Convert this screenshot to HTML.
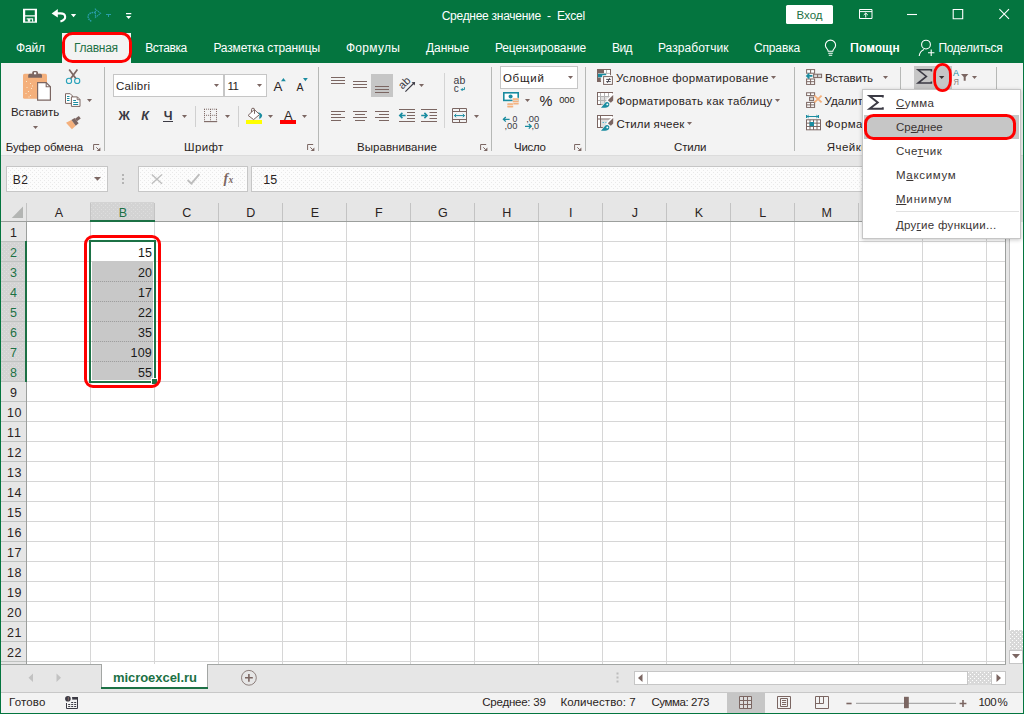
<!DOCTYPE html>
<html lang="ru"><head><meta charset="utf-8"><title>Среднее значение - Excel</title>
<style>
html,body{margin:0;padding:0}
body{width:1024px;height:714px;position:relative;overflow:hidden;background:#fff;font-family:"Liberation Sans",sans-serif;font-size:12px}
.a{position:absolute}
.t{position:absolute;white-space:pre;font-family:"Liberation Sans",sans-serif}
u{text-decoration:underline;text-underline-offset:1px}
svg{display:block;overflow:visible}
</style></head>
<body>
<div id="window">
<div class="a" style="left:0px;top:0px;width:1024px;height:63px;background:#04753f;"></div>
<div class="a" style="left:62px;top:33px;width:69px;height:30px;background:#f3f3f3;"></div>
<div class="a" style="left:1px;top:63px;width:1022px;height:92px;background:#f3f3f3;"></div>
<div class="a" style="left:1px;top:155px;width:1022px;height:47px;background:#e6e6e6;"></div>
<div class="a" style="left:1px;top:155px;width:1022px;height:1px;background:#dcdcdc;"></div>
<div class="a" style="left:6px;top:166px;width:102px;height:26px;background:#fcfcfc;border:1px solid #c6c6c6;box-sizing:border-box;"></div>
<div class="a" style="left:138px;top:166px;width:110px;height:26px;background:#fcfcfc;border:1px solid #c6c6c6;box-sizing:border-box;"></div>
<div class="a" style="left:251px;top:166px;width:769px;height:26px;background:#fcfcfc;border:1px solid #c6c6c6;box-sizing:border-box;"></div>
<svg class="a" style="left:8px;top:168px" width="98" height="22"><defs><pattern id="dp1" width="4" height="4" patternUnits="userSpaceOnUse"><rect x="0" y="0" width="1" height="1" fill="#e9e9e9"/><rect x="2" y="2" width="1" height="1" fill="#e9e9e9"/></pattern></defs><rect x="0" y="0" width="98" height="22" fill="url(#dp1)"/></svg>
<svg class="a" style="left:140px;top:168px" width="106" height="22"><defs><pattern id="dp2" width="4" height="4" patternUnits="userSpaceOnUse"><rect x="0" y="0" width="1" height="1" fill="#e9e9e9"/><rect x="2" y="2" width="1" height="1" fill="#e9e9e9"/></pattern></defs><rect x="0" y="0" width="106" height="22" fill="url(#dp2)"/></svg>
<svg class="a" style="left:253px;top:168px" width="765" height="22"><defs><pattern id="dp3" width="4" height="4" patternUnits="userSpaceOnUse"><rect x="0" y="0" width="1" height="1" fill="#e9e9e9"/><rect x="2" y="2" width="1" height="1" fill="#e9e9e9"/></pattern></defs><rect x="0" y="0" width="765" height="22" fill="url(#dp3)"/></svg>
<div class="a" style="left:1px;top:202px;width:1005px;height:20px;background:#e6e6e6;"></div>
<div class="a" style="left:90px;top:202px;width:64px;height:20px;background:#d3d3d3;"></div>
<svg class="a" style="left:91px;top:203px" width="62" height="16"><defs><pattern id="dp4" width="4" height="4" patternUnits="userSpaceOnUse"><rect x="0" y="0" width="1" height="1" fill="#dedede"/><rect x="2" y="2" width="1" height="1" fill="#dedede"/></pattern></defs><rect x="0" y="0" width="62" height="16" fill="url(#dp4)"/></svg>
<div class="a" style="left:26px;top:203px;width:1px;height:19px;background:#c3c3c3;"></div>
<div class="a" style="left:90px;top:203px;width:1px;height:19px;background:#c3c3c3;"></div>
<div class="a" style="left:154px;top:203px;width:1px;height:19px;background:#c3c3c3;"></div>
<div class="a" style="left:218px;top:203px;width:1px;height:19px;background:#c3c3c3;"></div>
<div class="a" style="left:282px;top:203px;width:1px;height:19px;background:#c3c3c3;"></div>
<div class="a" style="left:346px;top:203px;width:1px;height:19px;background:#c3c3c3;"></div>
<div class="a" style="left:410px;top:203px;width:1px;height:19px;background:#c3c3c3;"></div>
<div class="a" style="left:474px;top:203px;width:1px;height:19px;background:#c3c3c3;"></div>
<div class="a" style="left:538px;top:203px;width:1px;height:19px;background:#c3c3c3;"></div>
<div class="a" style="left:602px;top:203px;width:1px;height:19px;background:#c3c3c3;"></div>
<div class="a" style="left:666px;top:203px;width:1px;height:19px;background:#c3c3c3;"></div>
<div class="a" style="left:730px;top:203px;width:1px;height:19px;background:#c3c3c3;"></div>
<div class="a" style="left:794px;top:203px;width:1px;height:19px;background:#c3c3c3;"></div>
<div class="a" style="left:858px;top:203px;width:1px;height:19px;background:#c3c3c3;"></div>
<div class="a" style="left:922px;top:203px;width:1px;height:19px;background:#c3c3c3;"></div>
<div class="a" style="left:986px;top:203px;width:1px;height:19px;background:#c3c3c3;"></div>
<div class="a" style="left:1px;top:221px;width:1005px;height:1px;background:#9c9f9d;"></div>
<div class="a" style="left:90px;top:220px;width:65px;height:2px;background:#1c7145;"></div>
<svg class="a" style="left:11px;top:206px" width="13" height="13" viewBox="0 0 13 13"><path d="M12 0.6V12H0.8Z" fill="#b3b5b3"/></svg>
<div class="a" style="left:27px;top:222px;width:979px;height:442px;background:#fff;"></div>
<div class="a" style="left:90px;top:222px;width:1px;height:442px;background:#d6d6d6;"></div>
<div class="a" style="left:154px;top:222px;width:1px;height:442px;background:#d6d6d6;"></div>
<div class="a" style="left:218px;top:222px;width:1px;height:442px;background:#d6d6d6;"></div>
<div class="a" style="left:282px;top:222px;width:1px;height:442px;background:#d6d6d6;"></div>
<div class="a" style="left:346px;top:222px;width:1px;height:442px;background:#d6d6d6;"></div>
<div class="a" style="left:410px;top:222px;width:1px;height:442px;background:#d6d6d6;"></div>
<div class="a" style="left:474px;top:222px;width:1px;height:442px;background:#d6d6d6;"></div>
<div class="a" style="left:538px;top:222px;width:1px;height:442px;background:#d6d6d6;"></div>
<div class="a" style="left:602px;top:222px;width:1px;height:442px;background:#d6d6d6;"></div>
<div class="a" style="left:666px;top:222px;width:1px;height:442px;background:#d6d6d6;"></div>
<div class="a" style="left:730px;top:222px;width:1px;height:442px;background:#d6d6d6;"></div>
<div class="a" style="left:794px;top:222px;width:1px;height:442px;background:#d6d6d6;"></div>
<div class="a" style="left:858px;top:222px;width:1px;height:442px;background:#d6d6d6;"></div>
<div class="a" style="left:922px;top:222px;width:1px;height:442px;background:#d6d6d6;"></div>
<div class="a" style="left:986px;top:222px;width:1px;height:442px;background:#d6d6d6;"></div>
<div class="a" style="left:27px;top:241px;width:978px;height:1px;background:#d6d6d6;"></div>
<div class="a" style="left:27px;top:261px;width:978px;height:1px;background:#d6d6d6;"></div>
<div class="a" style="left:27px;top:281px;width:978px;height:1px;background:#d6d6d6;"></div>
<div class="a" style="left:27px;top:301px;width:978px;height:1px;background:#d6d6d6;"></div>
<div class="a" style="left:27px;top:321px;width:978px;height:1px;background:#d6d6d6;"></div>
<div class="a" style="left:27px;top:341px;width:978px;height:1px;background:#d6d6d6;"></div>
<div class="a" style="left:27px;top:361px;width:978px;height:1px;background:#d6d6d6;"></div>
<div class="a" style="left:27px;top:381px;width:978px;height:1px;background:#d6d6d6;"></div>
<div class="a" style="left:27px;top:401px;width:978px;height:1px;background:#d6d6d6;"></div>
<div class="a" style="left:27px;top:421px;width:978px;height:1px;background:#d6d6d6;"></div>
<div class="a" style="left:27px;top:441px;width:978px;height:1px;background:#d6d6d6;"></div>
<div class="a" style="left:27px;top:461px;width:978px;height:1px;background:#d6d6d6;"></div>
<div class="a" style="left:27px;top:481px;width:978px;height:1px;background:#d6d6d6;"></div>
<div class="a" style="left:27px;top:501px;width:978px;height:1px;background:#d6d6d6;"></div>
<div class="a" style="left:27px;top:521px;width:978px;height:1px;background:#d6d6d6;"></div>
<div class="a" style="left:27px;top:541px;width:978px;height:1px;background:#d6d6d6;"></div>
<div class="a" style="left:27px;top:561px;width:978px;height:1px;background:#d6d6d6;"></div>
<div class="a" style="left:27px;top:581px;width:978px;height:1px;background:#d6d6d6;"></div>
<div class="a" style="left:27px;top:601px;width:978px;height:1px;background:#d6d6d6;"></div>
<div class="a" style="left:27px;top:621px;width:978px;height:1px;background:#d6d6d6;"></div>
<div class="a" style="left:27px;top:641px;width:978px;height:1px;background:#d6d6d6;"></div>
<div class="a" style="left:27px;top:661px;width:978px;height:1px;background:#d6d6d6;"></div>
<div class="a" style="left:1px;top:222px;width:25px;height:442px;background:#e6e6e6;"></div>
<div class="a" style="left:1px;top:242px;width:25px;height:140px;background:#d3d3d3;"></div>
<svg class="a" style="left:2px;top:243px" width="22" height="138"><defs><pattern id="dp5" width="4" height="4" patternUnits="userSpaceOnUse"><rect x="0" y="0" width="1" height="1" fill="#dedede"/><rect x="2" y="2" width="1" height="1" fill="#dedede"/></pattern></defs><rect x="0" y="0" width="22" height="138" fill="url(#dp5)"/></svg>
<div class="a" style="left:1px;top:241px;width:25px;height:1px;background:#bfc2c0;"></div>
<div class="a" style="left:1px;top:261px;width:25px;height:1px;background:#bfc2c0;"></div>
<div class="a" style="left:1px;top:281px;width:25px;height:1px;background:#bfc2c0;"></div>
<div class="a" style="left:1px;top:301px;width:25px;height:1px;background:#bfc2c0;"></div>
<div class="a" style="left:1px;top:321px;width:25px;height:1px;background:#bfc2c0;"></div>
<div class="a" style="left:1px;top:341px;width:25px;height:1px;background:#bfc2c0;"></div>
<div class="a" style="left:1px;top:361px;width:25px;height:1px;background:#bfc2c0;"></div>
<div class="a" style="left:1px;top:381px;width:25px;height:1px;background:#bfc2c0;"></div>
<div class="a" style="left:1px;top:401px;width:25px;height:1px;background:#bfc2c0;"></div>
<div class="a" style="left:1px;top:421px;width:25px;height:1px;background:#bfc2c0;"></div>
<div class="a" style="left:1px;top:441px;width:25px;height:1px;background:#bfc2c0;"></div>
<div class="a" style="left:1px;top:461px;width:25px;height:1px;background:#bfc2c0;"></div>
<div class="a" style="left:1px;top:481px;width:25px;height:1px;background:#bfc2c0;"></div>
<div class="a" style="left:1px;top:501px;width:25px;height:1px;background:#bfc2c0;"></div>
<div class="a" style="left:1px;top:521px;width:25px;height:1px;background:#bfc2c0;"></div>
<div class="a" style="left:1px;top:541px;width:25px;height:1px;background:#bfc2c0;"></div>
<div class="a" style="left:1px;top:561px;width:25px;height:1px;background:#bfc2c0;"></div>
<div class="a" style="left:1px;top:581px;width:25px;height:1px;background:#bfc2c0;"></div>
<div class="a" style="left:1px;top:601px;width:25px;height:1px;background:#bfc2c0;"></div>
<div class="a" style="left:1px;top:621px;width:25px;height:1px;background:#bfc2c0;"></div>
<div class="a" style="left:1px;top:641px;width:25px;height:1px;background:#bfc2c0;"></div>
<div class="a" style="left:1px;top:661px;width:25px;height:1px;background:#bfc2c0;"></div>
<div class="a" style="left:26px;top:222px;width:1px;height:442px;background:#9c9f9d;"></div>
<div class="a" style="left:25px;top:241px;width:2px;height:141px;background:#1c7145;"></div>
<div class="a" style="left:92px;top:261px;width:61px;height:119px;background:#c8c8c8;"></div>
<div class="a" style="left:92px;top:281px;width:61px;height:1px;background:repeating-linear-gradient(90deg,#9f9f9f 0 1px,#c2c2c2 1px 2px);"></div>
<div class="a" style="left:92px;top:301px;width:61px;height:1px;background:repeating-linear-gradient(90deg,#9f9f9f 0 1px,#c2c2c2 1px 2px);"></div>
<div class="a" style="left:92px;top:321px;width:61px;height:1px;background:repeating-linear-gradient(90deg,#9f9f9f 0 1px,#c2c2c2 1px 2px);"></div>
<div class="a" style="left:92px;top:341px;width:61px;height:1px;background:repeating-linear-gradient(90deg,#9f9f9f 0 1px,#c2c2c2 1px 2px);"></div>
<div class="a" style="left:92px;top:361px;width:61px;height:1px;background:repeating-linear-gradient(90deg,#9f9f9f 0 1px,#c2c2c2 1px 2px);"></div>
<div class="a" style="left:89px;top:240px;width:67px;height:143px;border:2px solid #1c7145;box-sizing:border-box;"></div>
<div class="a" style="left:151px;top:378px;width:6px;height:6px;background:#fff;"></div>
<div class="a" style="left:152px;top:379px;width:5px;height:5px;background:#1c7145;"></div>
<div class="a" style="left:84.2px;top:234.9px;width:76.9px;height:152.9px;border:3px solid #ff0000;border-radius:9px;box-sizing:border-box;"></div>
<div class="a" style="left:1005px;top:202px;width:18px;height:462px;background:#e6e6e6;"></div>
<div class="a" style="left:1005px;top:222px;width:1px;height:442px;background:#9c9f9d;"></div>
<div class="a" style="left:1009px;top:222px;width:1px;height:408px;background:#c0c0c0;"></div>
<div class="a" style="left:1009px;top:629px;width:14px;height:1px;background:#c0c0c0;"></div>
<div class="a" style="left:1010px;top:222px;width:13px;height:408px;background:#fff;"></div>
<div class="a" style="left:1010px;top:630px;width:13px;height:20px;background:#d9d9d9;"></div>
<svg class="a" style="left:1010px;top:630px" width="13" height="20"><defs><pattern id="dp6" width="4" height="4" patternUnits="userSpaceOnUse"><rect x="0" y="0" width="1" height="1" fill="#ffffff"/><rect x="2" y="2" width="1" height="1" fill="#ffffff"/></pattern></defs><rect x="0" y="0" width="13" height="20" fill="url(#dp6)"/></svg>
<div class="a" style="left:1009px;top:650px;width:14px;height:14px;background:#fff;border:1px solid #c6c6c6;box-sizing:border-box;"></div>
<svg class="a" style="left:1012px;top:654px" width="8" height="5" viewBox="0 0 8 5"><path d="M0 0H8L4 4.5Z" fill="#7b6662"/></svg>
<div class="a" style="left:1px;top:664px;width:1022px;height:28px;background:#e6e6e6;"></div>
<div class="a" style="left:1px;top:692px;width:1022px;height:1px;background:#c8c8c8;"></div>
<div class="a" style="left:1px;top:664px;width:1005px;height:1px;background:#a3a6a4;"></div>
<div class="a" style="left:101px;top:664px;width:107px;height:24px;background:#fff;"></div>
<div class="a" style="left:101px;top:664px;width:1px;height:23px;background:#a3a6a4;"></div>
<div class="a" style="left:207px;top:664px;width:1px;height:23px;background:#a3a6a4;"></div>
<div class="a" style="left:101px;top:687px;width:107px;height:2px;background:#1c7145;"></div>
<svg class="a" style="left:28px;top:673px" width="34" height="10" viewBox="0 0 34 10"><path d="M5 0.5V9L0.5 4.75Z M28.5 0.5V9L33 4.75Z" fill="#c2c2c2"/></svg>
<svg class="a" style="left:240px;top:669px" width="18" height="18" viewBox="0 0 18 18"><circle cx="8.9" cy="8.8" r="7.4" fill="none" stroke="#8d7f7c" stroke-width="1"/><path d="M5 8.8H12.8M8.9 4.9V12.7" stroke="#7b6662" stroke-width="1.6"/></svg>
<svg class="a" style="left:616px;top:672px" width="3" height="11" viewBox="0 0 3 11"><path d="M0.5 0.5h2v2h-2zM0.5 4.5h2v2h-2zM0.5 8.5h2v2h-2z" fill="#bcbcbc"/></svg>
<div class="a" style="left:633.5px;top:671px;width:14px;height:14px;background:#fff;border:1px solid #c6c6c6;box-sizing:border-box;"></div>
<div class="a" style="left:647.5px;top:671px;width:320px;height:14px;background:#fff;border:1px solid #c6c6c6;border-left:none;box-sizing:border-box;"></div>
<div class="a" style="left:967.5px;top:671px;width:24px;height:14px;background:#d9d9d9;"></div>
<svg class="a" style="left:968px;top:672px" width="23" height="12"><defs><pattern id="dp7" width="4" height="4" patternUnits="userSpaceOnUse"><rect x="0" y="0" width="1" height="1" fill="#ffffff"/><rect x="2" y="2" width="1" height="1" fill="#ffffff"/></pattern></defs><rect x="0" y="0" width="23" height="12" fill="url(#dp7)"/></svg>
<div class="a" style="left:991px;top:671px;width:14.5px;height:14px;background:#fff;border:1px solid #c6c6c6;box-sizing:border-box;"></div>
<svg class="a" style="left:638px;top:674px" width="5" height="8" viewBox="0 0 5 8"><path d="M4.5 0V8L0 4Z" fill="#7b6662"/></svg>
<svg class="a" style="left:996px;top:674px" width="5" height="8" viewBox="0 0 5 8"><path d="M0.5 0V8L5 4Z" fill="#7b6662"/></svg>
<div class="a" style="left:1px;top:693px;width:1022px;height:20px;background:#f3f3f3;"></div>
<div class="a" style="left:727px;top:693px;width:38px;height:20px;background:#c6c6c6;"></div>
<div class="a" style="left:0px;top:63px;width:1px;height:651px;background:#04753f;"></div>
<div class="a" style="left:1023px;top:63px;width:1px;height:651px;background:#04753f;"></div>
<div class="a" style="left:0px;top:713px;width:1024px;height:1px;background:#04753f;"></div>
<div class="a" style="left:104px;top:67px;width:1px;height:84px;background:#b6b8b6;"></div>
<div class="a" style="left:318px;top:67px;width:1px;height:84px;background:#b6b8b6;"></div>
<div class="a" style="left:491px;top:67px;width:1px;height:84px;background:#b6b8b6;"></div>
<div class="a" style="left:585px;top:67px;width:1px;height:84px;background:#b6b8b6;"></div>
<div class="a" style="left:794px;top:67px;width:1px;height:84px;background:#b6b8b6;"></div>
<div class="a" style="left:900px;top:67px;width:1px;height:23px;background:#b6b8b6;"></div>
<div class="a" style="left:995.5px;top:67px;width:1px;height:23px;background:#b6b8b6;"></div>
<div class="a" style="left:195px;top:106px;width:1px;height:21px;background:#d0d0d0;"></div>
<div class="a" style="left:238px;top:106px;width:1px;height:21px;background:#d0d0d0;"></div>
<div class="a" style="left:444px;top:73px;width:1px;height:55px;background:#d4d4d4;"></div>
<div class="a" style="left:113px;top:74px;width:111px;height:23px;background:#fff;border:1px solid #c6c6c6;box-sizing:border-box;"></div>
<div class="a" style="left:224px;top:74px;width:43px;height:23px;background:#fff;border:1px solid #c6c6c6;box-sizing:border-box;"></div>
<div class="a" style="left:500px;top:66px;width:78px;height:23px;background:#fff;border:1px solid #c6c6c6;box-sizing:border-box;"></div>
<div class="a" style="left:371px;top:74px;width:22px;height:23px;background:#c6c6c6;"></div>
<div class="a" style="left:914px;top:66px;width:37.5px;height:23.5px;background:#c6c6c6;"></div>
<svg class="a" style="left:33.3px;top:126px" width="5" height="3" viewBox="0 0 5 3"><path d="M0 0H5L2.5 3Z" fill="#7b6662"/></svg>
<svg class="a" style="left:87px;top:99px" width="5" height="3" viewBox="0 0 5 3"><path d="M0 0H5L2.5 3Z" fill="#7b6662"/></svg>
<svg class="a" style="left:213.8px;top:84px" width="5" height="3" viewBox="0 0 5 3"><path d="M0 0H5L2.5 3Z" fill="#7b6662"/></svg>
<svg class="a" style="left:256.8px;top:84px" width="5" height="3" viewBox="0 0 5 3"><path d="M0 0H5L2.5 3Z" fill="#7b6662"/></svg>
<svg class="a" style="left:182px;top:115px" width="5" height="3" viewBox="0 0 5 3"><path d="M0 0H5L2.5 3Z" fill="#7b6662"/></svg>
<svg class="a" style="left:225px;top:115px" width="5" height="3" viewBox="0 0 5 3"><path d="M0 0H5L2.5 3Z" fill="#7b6662"/></svg>
<svg class="a" style="left:268px;top:115px" width="5" height="3" viewBox="0 0 5 3"><path d="M0 0H5L2.5 3Z" fill="#7b6662"/></svg>
<svg class="a" style="left:302px;top:115px" width="5" height="3" viewBox="0 0 5 3"><path d="M0 0H5L2.5 3Z" fill="#7b6662"/></svg>
<svg class="a" style="left:418.8px;top:84px" width="5" height="3" viewBox="0 0 5 3"><path d="M0 0H5L2.5 3Z" fill="#7b6662"/></svg>
<svg class="a" style="left:474px;top:115px" width="5" height="3" viewBox="0 0 5 3"><path d="M0 0H5L2.5 3Z" fill="#7b6662"/></svg>
<svg class="a" style="left:524.8px;top:99px" width="5" height="3" viewBox="0 0 5 3"><path d="M0 0H5L2.5 3Z" fill="#7b6662"/></svg>
<svg class="a" style="left:568px;top:76px" width="5" height="3" viewBox="0 0 5 3"><path d="M0 0H5L2.5 3Z" fill="#7b6662"/></svg>
<svg class="a" style="left:770.8px;top:76px" width="5" height="3" viewBox="0 0 5 3"><path d="M0 0H5L2.5 3Z" fill="#7b6662"/></svg>
<svg class="a" style="left:774.8px;top:99px" width="5" height="3" viewBox="0 0 5 3"><path d="M0 0H5L2.5 3Z" fill="#7b6662"/></svg>
<svg class="a" style="left:687px;top:122.3px" width="5" height="3" viewBox="0 0 5 3"><path d="M0 0H5L2.5 3Z" fill="#7b6662"/></svg>
<svg class="a" style="left:883px;top:76px" width="5" height="3" viewBox="0 0 5 3"><path d="M0 0H5L2.5 3Z" fill="#7b6662"/></svg>
<svg class="a" style="left:972.3px;top:76px" width="5" height="3" viewBox="0 0 5 3"><path d="M0 0H5L2.5 3Z" fill="#7b6662"/></svg>
<svg class="a" style="left:939px;top:76px" width="5.4" height="3" viewBox="0 0 5.4 3"><path d="M0 0H5.4L2.7 3Z" fill="#3b3332"/></svg>
<svg class="a" style="left:93.8px;top:176.5px" width="7" height="3.8" viewBox="0 0 7 3.8"><path d="M0 0H7L3.5 3.8Z" fill="#7b6662"/></svg>
<svg class="a" style="left:92.8px;top:144px" width="9" height="8" viewBox="0 0 9 8"><path d="M0.6 6V0.5H6.2" fill="none" stroke="#7b6662" stroke-width="1"/><path d="M7.4 3.4V7H3.6Z" fill="#7b6662"/><path d="M3.3 3.3L5.5 5.5" stroke="#7b6662" stroke-width="1"/></svg>
<svg class="a" style="left:306.8px;top:144px" width="9" height="8" viewBox="0 0 9 8"><path d="M0.6 6V0.5H6.2" fill="none" stroke="#7b6662" stroke-width="1"/><path d="M7.4 3.4V7H3.6Z" fill="#7b6662"/><path d="M3.3 3.3L5.5 5.5" stroke="#7b6662" stroke-width="1"/></svg>
<svg class="a" style="left:479.8px;top:144px" width="9" height="8" viewBox="0 0 9 8"><path d="M0.6 6V0.5H6.2" fill="none" stroke="#7b6662" stroke-width="1"/><path d="M7.4 3.4V7H3.6Z" fill="#7b6662"/><path d="M3.3 3.3L5.5 5.5" stroke="#7b6662" stroke-width="1"/></svg>
<svg class="a" style="left:573.8px;top:144px" width="9" height="8" viewBox="0 0 9 8"><path d="M0.6 6V0.5H6.2" fill="none" stroke="#7b6662" stroke-width="1"/><path d="M7.4 3.4V7H3.6Z" fill="#7b6662"/><path d="M3.3 3.3L5.5 5.5" stroke="#7b6662" stroke-width="1"/></svg>
<div class="a" style="left:163px;top:121px;width:10px;height:1px;background:#3b3a44;"></div>
<div class="a" style="left:246px;top:120px;width:16px;height:4px;background:#ffff00;"></div>
<div class="a" style="left:280px;top:120px;width:16px;height:4px;background:#ff0000;"></div>
<svg class="a" style="left:22px;top:8px" width="16" height="16" viewBox="22 8 16 16"><path fill-rule="evenodd" fill="#fff" d="M23 8.8h14v14h-14z M25.2 10.2h9.6v5h-9.6z M25.2 16.6h9.6v5h-9.6z"/><path d="M26.6 18.2h6.6v3.6h-1.2v-2.4h-1.8v2.4h-2.4v-2.4h-1.2z" fill="#fff" opacity="0.95"/></svg>
<svg class="a" style="left:50px;top:8px" width="28" height="16" viewBox="50 8 28 16"><path d="M51.6 13.4L57.8 9V17.6Z" fill="#fff"/><path d="M57 13.4H60.6C65.8 13.4 67.6 19.2 60.4 21.4" fill="none" stroke="#fff" stroke-width="2.1"/><path d="M70.9 14H76.2L73.55 17.2Z" fill="#fff"/></svg>
<svg class="a" style="left:86px;top:8px" width="28" height="16" viewBox="86 8 28 16"><g opacity="0.9"><path d="M100.6 13.4L95.4 9.2V17.4Z" fill="none" stroke="#2fa3b4" stroke-width="1.1" stroke-dasharray="1.4 0.7"/><path d="M95.6 12.6H93C87.2 13 86.4 18.4 91.6 21.6" fill="none" stroke="#2fa3b4" stroke-width="1.5" stroke-dasharray="1.6 0.7"/><path d="M106 14.5H111M108.5 14.5V17" stroke="#2fa3b4" stroke-width="1" fill="none"/></g></svg>
<svg class="a" style="left:125px;top:12px" width="8" height="8" viewBox="125 12 8 8"><path d="M126 13h5.3v1.2h-5.3z M126 15.9h5.3L128.65 19Z" fill="#fff"/></svg>
<svg class="a" style="left:858px;top:8px" width="16" height="12" viewBox="858 8 16 12"><path d="M859.5 9.5h12.5v9h-12.5z M859.5 11.6h12.5" fill="none" stroke="#fff" stroke-width="1"/><path d="M865.75 17.5V13.2M863.7 15L865.75 13L867.8 15" fill="none" stroke="#fff" stroke-width="1"/></svg>
<svg class="a" style="left:906px;top:13px" width="12" height="3" viewBox="906 13 12 3"><path d="M907 14.5H917" stroke="#fff" stroke-width="1.1"/></svg>
<svg class="a" style="left:952px;top:8px" width="12" height="12" viewBox="952 8 12 12"><path d="M953.2 9.5h9.5v9.2h-9.5z" fill="none" stroke="#fff" stroke-width="1.1"/></svg>
<svg class="a" style="left:998px;top:8px" width="12" height="12" viewBox="998 8 12 12"><path d="M999.4 9.2L1009 18.8M1009 9.2L999.4 18.8" fill="none" stroke="#fff" stroke-width="1.1"/></svg>
<div class="a" style="left:786px;top:5px;width:47px;height:19px;background:#fff;border-radius:1.5px"></div>
<svg class="a" style="left:823px;top:38px" width="15" height="19" viewBox="823 38 15 19"><path d="M828.2 51.3C828.2 49 825.4 48.3 825.4 45.2A5.1 5.1 0 0 1 835.6 45.2C835.6 48.3 832.8 49 832.8 51.3Z" fill="none" stroke="#fff" stroke-width="1.1"/><path d="M828.2 53.2H832.8M828.8 55.2H832.2" stroke="#fff" stroke-width="1.1"/></svg>
<svg class="a" style="left:918px;top:38px" width="18" height="19" viewBox="918 38 18 19"><circle cx="926" cy="44.6" r="4.4" fill="none" stroke="#fff" stroke-width="1.1"/><path d="M919.2 56C919.6 52.6 921.6 50.4 924 49.4" fill="none" stroke="#fff" stroke-width="1.1"/><path d="M928 52.8H934.4M931.2 49.6V56" stroke="#fff" stroke-width="1.1"/></svg>
<svg class="a" style="left:22px;top:70px" width="30" height="32" viewBox="22 70 30 32"><rect x="23" y="73.8" width="24" height="25" rx="1.6" fill="#f4b07c"/><g fill="#fde9c9"><rect x="26" y="81" width="1" height="1"/><rect x="30" y="83" width="1" height="1"/><rect x="26.5" y="87" width="1" height="1"/><rect x="31" y="88" width="1" height="1"/><rect x="28" y="91" width="1" height="1"/><rect x="25.5" y="93" width="1" height="1"/><rect x="30" y="95" width="1" height="1"/><rect x="32" y="85.5" width="1" height="1"/><rect x="28.5" y="96.5" width="1" height="1"/></g><path d="M28.2 77.8V75.3Q28.2 73.8 29.8 73.8H32.2V72.4Q32.2 70.9 33.8 70.9H36.4Q38 70.9 38 72.4V73.8H40.4Q42 73.8 42 75.3V77.8Z" fill="#7b6662"/><rect x="34" y="72.3" width="2.2" height="2" fill="#fff"/><path d="M37.6 82.6H46.2L50.4 86.8V100.2H37.6Z" fill="#fff" stroke="#7b6662" stroke-width="1.2"/><path d="M46.2 82.6V86.8H50.4" fill="none" stroke="#7b6662" stroke-width="1.1"/></svg>
<svg class="a" style="left:65px;top:68px" width="17" height="17" viewBox="65 68 17 17"><path d="M69.2 69.4L76.2 79M77.4 69.4L70.4 79" stroke="#7b6662" stroke-width="1.7" fill="none"/><circle cx="69" cy="80.9" r="2.6" fill="none" stroke="#2aa3bb" stroke-width="1.1"/><circle cx="77.2" cy="80.9" r="2.6" fill="none" stroke="#2aa3bb" stroke-width="1.1"/></svg>
<svg class="a" style="left:64px;top:92px" width="18" height="16" viewBox="64 92 18 16"><path d="M65.5 93.7H70.2L72.4 95.9V103.4H65.5Z" fill="#fff" stroke="#7b6662" stroke-width="1"/><path d="M67 96.5H69.5M67 98.5H69.5M67 100.5H69.5" stroke="#1a8ca0" stroke-width="1"/><path d="M71.4 96.9H77.4L80 99.5V106.4H71.4Z" fill="#fff" stroke="#7b6662" stroke-width="1"/><path d="M77.2 97V99.7H80" fill="none" stroke="#7b6662" stroke-width="0.9"/><path d="M73.2 100.5H76M73.2 102.5H78.2M73.2 104.5H78.2" stroke="#1a8ca0" stroke-width="1"/></svg>
<svg class="a" style="left:65px;top:115px" width="17" height="15" viewBox="65 115 17 15"><path d="M66 122.8L71.4 120L75.8 125.8L71.9 129.2Z" fill="#f4b07c"/><path d="M71.4 120L74.6 118L78.6 123.2L75.8 125.8Z" fill="#7b6662"/><path d="M76 120L79.8 117.2" stroke="#7b6662" stroke-width="3.2" fill="none"/></svg>
<svg class="a" style="left:203px;top:108px" width="15" height="15" viewBox="203 108 15 15"><path d="M204 109.2H217M204 115.3H217M204.5 109V121M210.5 109V121M216.5 109V121" stroke="#7b6662" stroke-width="1" stroke-dasharray="1 1.05" fill="none"/><path d="M204 121.6H217.2" stroke="#7b6662" stroke-width="1.1"/></svg>
<svg class="a" style="left:280px;top:77px" width="8" height="5" viewBox="280 77 8 5"><path d="M281 81.2H285.8L283.4 78Z" fill="#1a8ca0"/></svg>
<svg class="a" style="left:302px;top:77px" width="8" height="5" viewBox="302 77 8 5"><path d="M303 78H307.8L305.4 81.2Z" fill="#1a8ca0"/></svg>
<svg class="a" style="left:246px;top:107px" width="18" height="14" viewBox="246 107 18 14"><path d="M254.3 109.5L259.6 114.5L253.6 119.6L248.1 115.4Z" fill="#fff" stroke="#7b6662" stroke-width="1"/><path d="M251.5 112V109.6Q251.5 108.2 253 108.2Q254.5 108.2 254.5 109.6V113.8" fill="none" stroke="#7b6662" stroke-width="1"/><path d="M258 111.9Q261.4 112.6 262.2 115Q262.4 117.6 259.6 119.3Q259 117.4 259.4 116Q260.4 114.6 258 111.9Z" fill="#1a8ca0"/></svg>
<svg class="a" style="left:330px;top:76px" width="16" height="9" viewBox="330 76 16 9"><path d="M331 77.5H345M331 80.5H345M331 83.5H345" stroke="#7b6662" stroke-width="1" fill="none"/></svg>
<svg class="a" style="left:352px;top:80px" width="16" height="9" viewBox="352 80 16 9"><path d="M353 81.5H367M353 84.5H367M353 87.5H367" stroke="#7b6662" stroke-width="1" fill="none"/></svg>
<svg class="a" style="left:374px;top:85px" width="16" height="9" viewBox="374 85 16 9"><path d="M375 86.5H389M375 89.5H389M375 92.5H389" stroke="#7b6662" stroke-width="1" fill="none"/></svg>
<svg class="a" style="left:330px;top:110px" width="16" height="12" viewBox="330 110 16 12"><path d="M331 111.5H345M331 114.5H341M331 117.5H345M331 120.5H341" stroke="#7b6662" stroke-width="1" fill="none"/></svg>
<svg class="a" style="left:352px;top:110px" width="16" height="12" viewBox="352 110 16 12"><path d="M353 111.5H367M355 114.5H365M353 117.5H367M355 120.5H365" stroke="#7b6662" stroke-width="1" fill="none"/></svg>
<svg class="a" style="left:374px;top:110px" width="16" height="12" viewBox="374 110 16 12"><path d="M375 111.5H389M379 114.5H389M375 117.5H389M379 120.5H389" stroke="#7b6662" stroke-width="1" fill="none"/></svg>
<svg class="a" style="left:398px;top:108px" width="18" height="15" viewBox="398 108 18 15"><path d="M399 109.5H415M407 112.5H415M407 115.5H415M407 118.5H415M399 121.5H415" stroke="#7b6662" stroke-width="1" fill="none"/><path d="M399.8 115.5H405.6M402.4 112.9L399.8 115.5L402.4 118.1" stroke="#1a8ca0" stroke-width="1.6" fill="none"/></svg>
<svg class="a" style="left:420px;top:108px" width="18" height="15" viewBox="420 108 18 15"><path d="M421 109.5H437M429.5 112.5H437M429.5 115.5H437M429.5 118.5H437M421 121.5H437" stroke="#7b6662" stroke-width="1" fill="none"/><path d="M421.2 115.5H427M424.4 112.9L427 115.5L424.4 118.1" stroke="#1a8ca0" stroke-width="1.6" fill="none"/></svg>
<svg class="a" style="left:398px;top:76px" width="20" height="17" viewBox="398 76 20 17"><text x="0" y="0" transform="translate(402.6,89.8) rotate(-45)" font-family="Liberation Sans, sans-serif" font-size="11" fill="#3b3a44">ab</text><path d="M405.4 91.6L414 83" stroke="#3b3a44" stroke-width="1.1" fill="none"/><path d="M415.1 81.9L411.6 82.3L414.7 85.4Z" fill="#3b3a44"/></svg>
<svg class="a" style="left:453px;top:76px" width="14" height="17" viewBox="453 76 14 17"><text x="453.6" y="84.1" font-family="Liberation Sans, sans-serif" font-size="10" fill="#3b3a44" textLength="11.6" lengthAdjust="spacingAndGlyphs">ab</text><text x="453.8" y="91.7" font-family="Liberation Sans, sans-serif" font-size="10" fill="#3b3a44">c</text><path d="M464.4 87.2V89.6H461.2M462.6 88.2L461.2 89.6L462.6 91" stroke="#1a8ca0" stroke-width="1" fill="none"/></svg>
<svg class="a" style="left:451px;top:107px" width="17" height="17" viewBox="451 107 17 17"><path d="M452.5 108.5H466.5V122.5H452.5Z M452.5 111.5H466.5M452.5 119.5H466.5M459.5 108.5V111.5M459.5 119.5V122.5" fill="none" stroke="#7b6662" stroke-width="1"/><path d="M454.6 115.6H464.4M456.2 114L454.4 115.6L456.2 117.2M462.8 114L464.6 115.6L462.8 117.2" stroke="#1a8ca0" stroke-width="1" fill="none"/></svg>
<svg class="a" style="left:502px;top:91px" width="18" height="18" viewBox="502 91 18 18"><rect x="503.8" y="92.8" width="14.4" height="7.6" fill="#fff" stroke="#1a8ca0" stroke-width="1.6"/><circle cx="510.6" cy="96.4" r="2" fill="#1a8ca0"/><g fill="#f4b07c" stroke="#f3f3f3" stroke-width="0.5"><rect x="512.4" y="98" width="6.6" height="2.4" rx="1"/><rect x="512.4" y="100.4" width="6.6" height="2.2" rx="1"/><rect x="512.4" y="102.6" width="6.6" height="2.2" rx="1"/><rect x="507" y="103" width="6.4" height="2.4" rx="1"/><rect x="507" y="105.4" width="6.4" height="2.4" rx="1"/></g></svg>
<svg class="a" style="left:502px;top:115px" width="17" height="16" viewBox="502 115 17 16"><path d="M503.4 119.3H509.6M505.8 117L503.4 119.3L505.8 121.6" stroke="#1a8ca0" stroke-width="1.3" fill="none"/><text x="512.6" y="122" font-family="Liberation Sans, sans-serif" font-size="9" fill="#3b3a44" textLength="4.8" lengthAdjust="spacingAndGlyphs">0</text><text x="504.4" y="129.2" font-family="Liberation Sans, sans-serif" font-size="9" fill="#3b3a44" textLength="13" lengthAdjust="spacingAndGlyphs">,00</text></svg>
<svg class="a" style="left:524px;top:115px" width="17" height="16" viewBox="524 115 17 16"><path d="M525 126.3H531.2M528.8 124L531.2 126.3L528.8 128.6" stroke="#1a8ca0" stroke-width="1.3" fill="none"/><text x="526.2" y="122" font-family="Liberation Sans, sans-serif" font-size="9" fill="#3b3a44" textLength="13" lengthAdjust="spacingAndGlyphs">,00</text><text x="531.6" y="129.2" font-family="Liberation Sans, sans-serif" font-size="9" fill="#3b3a44" textLength="7.6" lengthAdjust="spacingAndGlyphs">,0</text></svg>
<svg class="a" style="left:596px;top:68px" width="18" height="18" viewBox="596 68 18 18"><rect x="597.5" y="69.5" width="13" height="12" fill="#fff" stroke="#7b6662" stroke-width="1"/><rect x="597" y="69" width="7" height="4.4" fill="#7b6662"/><path d="M606.5 70V73.4M604 73.4H610" stroke="#b8b8b8" stroke-width="1" fill="none"/><rect x="598" y="73.8" width="8.2" height="3.5" fill="#1a8ca0"/><rect x="597" y="77.6" width="3.8" height="4.4" fill="#7b6662"/><rect x="601" y="77.6" width="3" height="5" fill="#f3f3f3"/><rect x="602.2" y="75.2" width="11.6" height="10.6" fill="#f9f9f9"/><rect x="603.6" y="76.6" width="8.8" height="7.8" fill="#fff" stroke="#7b6662" stroke-width="1"/><path d="M606.2 79.4H610.8M606.2 81.6H610.8M609.6 78.2L607.4 82.8" stroke="#3b3a44" stroke-width="0.9"/></svg>
<svg class="a" style="left:596px;top:91px" width="19" height="18" viewBox="596 91 19 18"><rect x="597.5" y="92.5" width="15" height="12" fill="#fff" stroke="#7b6662" stroke-width="1"/><rect x="601" y="97" width="11" height="7.5" fill="#dedede"/><path d="M600.5 93V104M604.5 93V104M608.5 93V104M598 96.5H612M598 100.5H612" stroke="#b2b2b2" stroke-width="1" fill="none"/><path d="M614 93.6V106H601.6L606.6 100.4Z" fill="#f3f3f3"/><path d="M606.6 100.6L613.4 93.4" stroke="#fff" stroke-width="1.4"/><path d="M613.2 94.9V100.4L610.8 102.8L607.8 100.2Z" fill="#7b6662"/><path d="M601 107.8L604.6 103.4Q606 101.7 608 102.2Q609.7 103 609.3 105Q608.6 107.6 605 107.8Z" fill="#1a8ca0"/><circle cx="607.3" cy="104.4" r="0.95" fill="#fff"/></svg>
<svg class="a" style="left:596px;top:114px" width="19" height="18" viewBox="596 114 19 18"><rect x="597.5" y="115.5" width="15" height="12" fill="#fff" stroke="#7b6662" stroke-width="1"/><rect x="601" y="119.5" width="11" height="7.5" fill="#dedede"/><path d="M598 119H612M600.5 116V127" stroke="#7b6662" stroke-width="1" fill="none"/><path d="M602.6 122.5h1.4M605.4 122.5h1.4" stroke="#4ab6d0" stroke-width="1.1"/><path d="M614 116.6V129H601.6L606.6 123.4Z" fill="#f3f3f3"/><path d="M606.6 123.6L613.4 116.4" stroke="#fff" stroke-width="1.4"/><path d="M613.2 117.9V123.4L610.8 125.8L607.8 123.2Z" fill="#7b6662"/><path d="M601 130.8L604.6 126.4Q606 124.7 608 125.2Q609.7 126 609.3 128Q608.6 130.6 605 130.8Z" fill="#1a8ca0"/><circle cx="607.3" cy="127.4" r="0.95" fill="#fff"/></svg>
<svg class="a" style="left:805px;top:68px" width="18" height="18" viewBox="805 68 18 18"><rect x="806.6" y="69.6" width="8" height="3.6" fill="#fff" stroke="#7b6662" stroke-width="1"/><path d="M810.6 69.6V73.2" stroke="#7b6662" stroke-width="1" fill="none"/><rect x="813.6" y="74.2" width="8" height="3.4" fill="#d6d6d6" stroke="#7b6662" stroke-width="1"/><path d="M817.6 74.2V77.6" stroke="#7b6662" stroke-width="1" fill="none"/><rect x="806.6" y="79" width="8" height="5.4" fill="#fff" stroke="#7b6662" stroke-width="1"/><path d="M810.6 79V84.4M806.6 81.7H814.6" stroke="#7b6662" stroke-width="1" fill="none"/><path d="M807 75.9H812.4M809.4 73.5L806.9 75.9L809.4 78.3" stroke="#1a8ca0" stroke-width="1.6" fill="none"/></svg>
<svg class="a" style="left:805px;top:91px" width="18" height="18" viewBox="805 91 18 18"><rect x="806.6" y="92.8" width="8" height="2.8" fill="#fff" stroke="#7b6662" stroke-width="1"/><path d="M810.6 92.8V95.6" stroke="#7b6662" stroke-width="1" fill="none"/><rect x="809.6" y="97.2" width="4" height="3.4" fill="#d6d6d6" stroke="#7b6662" stroke-width="1"/><rect x="806.6" y="102.4" width="8" height="5" fill="#fff" stroke="#7b6662" stroke-width="1"/><path d="M810.6 102.4V107.4M806.6 104.9H814.6" stroke="#7b6662" stroke-width="1" fill="none"/><path d="M814.4 95.6L821.6 102.4M821.6 95.6L814.4 102.4" stroke="#f4b07c" stroke-width="1.9" fill="none"/></svg>
<svg class="a" style="left:805px;top:114px" width="18" height="18" viewBox="805 114 18 18"><path d="M806.5 115V118M818.5 115V118M807 116.5H818M808.6 115.2L807 116.5L808.6 117.8M816.4 115.2L818 116.5L816.4 117.8" stroke="#1a8ca0" stroke-width="1" fill="none"/><rect x="806.5" y="119.8" width="14" height="10" fill="#fff" stroke="#7b6662" stroke-width="1"/><path d="M810 119.8V129.8M813.5 119.8V129.8M817 119.8V129.8M806.5 123.133H820.5M806.5 126.467H820.5" stroke="#7b6662" stroke-width="1" fill="none"/><rect x="809.6" y="122" width="4.4" height="4.2" fill="#1a8ca0"/></svg>
<svg class="a" style="left:916px;top:68px" width="17" height="17" viewBox="916 68 17 17"><path d="M931.4 71.4V69.8H918.1L926.376 76.4L918.1 83H931.4V81.4" fill="none" stroke="#3b3a44" stroke-width="1.6" stroke-linejoin="miter"/></svg>
<svg class="a" style="left:952px;top:68px" width="18" height="18" viewBox="952 68 18 18"><text x="953" y="75.6" font-family="Liberation Sans, sans-serif" font-size="9.5" fill="#1a8ca0" textLength="6" lengthAdjust="spacingAndGlyphs">А</text><text x="953.4" y="84.8" font-family="Liberation Sans, sans-serif" font-size="9.5" fill="#8a7f7c" textLength="5.4" lengthAdjust="spacingAndGlyphs">Я</text><path d="M961 74H968.4L965.7 77V80.8H963.7V77Z" fill="#7b6662"/></svg>
<svg class="a" style="left:121px;top:173px" width="4" height="11" viewBox="121 173 4 11"><path d="M122 174h2v2h-2zM122 178h2v2h-2zM122 182h2v2h-2z" fill="#b4b4b4"/></svg>
<svg class="a" style="left:150px;top:173px" width="14" height="12" viewBox="150 173 14 12"><path d="M151.8 174.4L162 183.8M162 174.4L151.8 183.8" stroke="#bdbdbd" stroke-width="1.3" fill="none"/></svg>
<svg class="a" style="left:186px;top:173px" width="15" height="12" viewBox="186 173 15 12"><path d="M187.6 180L191.4 183.6L199.4 174.2" stroke="#bdbdbd" stroke-width="1.9" fill="none"/></svg>
<svg class="a" style="left:222px;top:171px" width="14" height="15" viewBox="222 171 14 15"><text x="223.6" y="183" font-family="Liberation Serif, serif" font-size="14" font-style="italic" font-weight="bold" fill="#7b6662">f</text><text x="228.6" y="183.4" font-family="Liberation Serif, serif" font-size="9.5" font-style="italic" font-weight="bold" fill="#7b6662">x</text></svg>
<svg class="a" style="left:65px;top:695px" width="14" height="15" viewBox="65 695 14 15"><path d="M66.5 703V708.5H77.5V697.5H72.4" fill="none" stroke="#3b3a44" stroke-width="1"/><rect x="72.2" y="697" width="5.8" height="2.6" fill="#3b3a44"/><path d="M71.2 702.5h2M74.2 702.5h2M68.2 704.5h2M71.2 704.5h2M74.2 704.5h2M68.2 706.5h2M71.2 706.5h2M74.2 706.5h2" stroke="#3b3a44" stroke-width="1"/><circle cx="67.9" cy="698.8" r="2.8" fill="#3b3a44"/><path d="M68.3 697V700.6" stroke="#a07a70" stroke-width="0.8"/></svg>
<svg class="a" style="left:739px;top:696px" width="14" height="14" viewBox="739 696 14 14"><rect x="739.5" y="696.5" width="12" height="12" fill="#dedede"/><path d="M739.5 696.5H751.5V708.5H739.5ZM743.5 696.5V708.5M747.5 696.5V708.5M739.5 700.5H751.5M739.5 704.5H751.5" fill="none" stroke="#7b6662" stroke-width="1"/></svg>
<svg class="a" style="left:776px;top:695px" width="16" height="15" viewBox="776 695 16 15"><path d="M777.5 696.5H790.5V708.5H777.5Z" fill="none" stroke="#7b6662" stroke-width="1"/><path d="M780.5 698.5H787.5V706.5H780.5ZM782 700.5H786.2M782 702.5H786.2M782 704.5H786.2" fill="none" stroke="#7b6662" stroke-width="1"/></svg>
<svg class="a" style="left:814px;top:695px" width="16" height="15" viewBox="814 695 16 15"><path d="M815.5 696.5H828.5V708.5H815.5ZM819.5 696.5V703.5M823.5 696.5V703.5M815.5 703.5H823.5" fill="none" stroke="#7b6662" stroke-width="1"/></svg>
<svg class="a" style="left:845px;top:695px" width="124" height="15" viewBox="845 695 124 15"><path d="M846.4 703.5H851.6" stroke="#7b6662" stroke-width="1.6"/><path d="M856 703.3H956" stroke="#8f8f8f" stroke-width="0.9"/><rect x="904" y="696.8" width="4.8" height="11.4" fill="#7b6662"/><path d="M959.6 703.5H966.4M963 700.1V706.9" stroke="#7b6662" stroke-width="1.6"/></svg>
<span class="t" style="left:441.70px;top:10.00px;font-size:12px;line-height:12px;letter-spacing:-0.270px;color:#fff;">Среднее значение  -  Excel</span>
<span class="t" style="left:796.40px;top:10.00px;font-size:11.5px;line-height:11.5px;letter-spacing:0.046px;color:#1c7145;">Вход</span>
<span class="t" style="left:15.90px;top:42.00px;font-size:12px;line-height:12px;letter-spacing:-0.104px;color:#fff;">Файл</span>
<span class="t" style="left:145.20px;top:42.00px;font-size:12px;line-height:12px;letter-spacing:-0.416px;color:#fff;">Вставка</span>
<span class="t" style="left:213.40px;top:42.00px;font-size:12px;line-height:12px;letter-spacing:-0.140px;color:#fff;">Разметка страницы</span>
<span class="t" style="left:345.90px;top:42.00px;font-size:12px;line-height:12px;letter-spacing:0.283px;color:#fff;">Формулы</span>
<span class="t" style="left:425.90px;top:42.00px;font-size:12px;line-height:12px;letter-spacing:-0.027px;color:#fff;">Данные</span>
<span class="t" style="left:494.90px;top:42.00px;font-size:12px;line-height:12px;letter-spacing:-0.105px;color:#fff;">Рецензирование</span>
<span class="t" style="left:611.90px;top:42.00px;font-size:12px;line-height:12px;letter-spacing:-0.506px;color:#fff;">Вид</span>
<span class="t" style="left:657.90px;top:42.00px;font-size:12px;line-height:12px;letter-spacing:0.065px;color:#fff;">Разработчик</span>
<span class="t" style="left:753.90px;top:42.00px;font-size:12px;line-height:12px;letter-spacing:-0.125px;color:#fff;">Справка</span>
<span class="t" style="left:938.40px;top:42.00px;font-size:12px;line-height:12px;letter-spacing:-0.207px;color:#fff;">Поделиться</span>
<span class="t" style="left:73.90px;top:42.00px;font-size:12px;line-height:12px;letter-spacing:-0.241px;color:#1c7145;">Главная</span>
<span class="t" style="left:849.90px;top:42.00px;font-size:12px;line-height:12px;letter-spacing:0.494px;color:#fff;text-shadow:0.45px 0 0 #fff;">Помощн</span>
<span class="t" style="left:10.90px;top:107.00px;font-size:11.5px;line-height:11.5px;letter-spacing:-0.069px;color:#2a2322;">Вставить</span>
<span class="t" style="left:5.70px;top:142.00px;font-size:11.5px;line-height:11.5px;letter-spacing:-0.055px;color:#2a2322;">Буфер обмена</span>
<span class="t" style="left:115.90px;top:81.00px;font-size:11.5px;line-height:11.5px;letter-spacing:0.258px;color:#2a2322;">Calibri</span>
<span class="t" style="left:227.40px;top:81.00px;font-size:11.5px;line-height:11.5px;letter-spacing:-0.377px;color:#2a2322;">11</span>
<span class="t" style="left:118.39px;top:110.00px;font-size:12.5px;line-height:12.5px;letter-spacing:0.000px;color:#3b3a44;font-weight:bold;">Ж</span>
<span class="t" style="left:141.16px;top:110.00px;font-size:12.5px;line-height:12.5px;letter-spacing:0.000px;color:#3b3a44;font-weight:bold;font-style:italic;">К</span>
<span class="t" style="left:163.70px;top:110.00px;font-size:12.5px;line-height:12.5px;letter-spacing:0.000px;color:#3b3a44;font-weight:bold;">Ч</span>
<span class="t" style="left:184.10px;top:142.00px;font-size:11.5px;line-height:11.5px;letter-spacing:0.331px;color:#2a2322;">Шрифт</span>
<span class="t" style="left:273.56px;top:80.00px;font-size:13.3px;line-height:13.3px;letter-spacing:0.000px;color:#2a2322;">A</span>
<span class="t" style="left:296.49px;top:82.00px;font-size:10.5px;line-height:10.5px;letter-spacing:0.000px;color:#2a2322;">A</span>
<span class="t" style="left:283.88px;top:110.00px;font-size:12.8px;line-height:12.8px;letter-spacing:0.000px;color:#2a2322;">A</span>
<span class="t" style="left:356.90px;top:142.00px;font-size:11.5px;line-height:11.5px;letter-spacing:0.077px;color:#2a2322;">Выравнивание</span>
<span class="t" style="left:502.90px;top:73.00px;font-size:11.5px;line-height:11.5px;letter-spacing:0.771px;color:#2a2322;">Общий</span>
<span class="t" style="left:539.40px;top:94.00px;font-size:14.5px;line-height:14.5px;letter-spacing:0.000px;color:#2a2322;">%</span>
<span class="t" style="left:559.20px;top:95.00px;font-size:9.4px;line-height:9.4px;letter-spacing:-0.085px;color:#2a2322;">000</span>
<span class="t" style="left:514.10px;top:142.00px;font-size:11.5px;line-height:11.5px;letter-spacing:-0.316px;color:#2a2322;">Число</span>
<span class="t" style="left:615.90px;top:73.00px;font-size:11.5px;line-height:11.5px;letter-spacing:0.278px;color:#2a2322;">Условное форматирование</span>
<span class="t" style="left:616.40px;top:96.00px;font-size:11.5px;line-height:11.5px;letter-spacing:0.255px;color:#2a2322;">Форматировать как таблицу</span>
<span class="t" style="left:616.40px;top:119.00px;font-size:11.5px;line-height:11.5px;letter-spacing:0.148px;color:#2a2322;">Стили ячеек</span>
<span class="t" style="left:674.10px;top:142.00px;font-size:11.5px;line-height:11.5px;letter-spacing:-0.228px;color:#2a2322;">Стили</span>
<span class="t" style="left:824.90px;top:73.00px;font-size:11.5px;line-height:11.5px;letter-spacing:-0.081px;color:#2a2322;">Вставить</span>
<span class="t" style="left:824.40px;top:96.00px;font-size:11.5px;line-height:11.5px;letter-spacing:0.113px;color:#2a2322;">Удалить</span>
<span class="t" style="left:825.00px;top:119.00px;font-size:11.5px;line-height:11.5px;letter-spacing:0.373px;color:#2a2322;">Формат</span>
<span class="t" style="left:826.70px;top:142.00px;font-size:11.5px;line-height:11.5px;letter-spacing:0.470px;color:#2a2322;">Ячейки</span>
<span class="t" style="left:12.70px;top:174.00px;font-size:12px;line-height:12px;letter-spacing:0.606px;color:#2a2322;">B2</span>
<span class="t" style="left:263.20px;top:174.00px;font-size:12.5px;line-height:12.5px;letter-spacing:-0.003px;color:#2a2322;">15</span>
<span class="t" style="left:54.63px;top:207.00px;font-size:12.5px;line-height:12.5px;letter-spacing:0.000px;color:#2a2322;">A</span>
<span class="t" style="left:118.63px;top:207.00px;font-size:12.5px;line-height:12.5px;letter-spacing:0.000px;color:#1c7145;">B</span>
<span class="t" style="left:182.28px;top:207.00px;font-size:12.5px;line-height:12.5px;letter-spacing:0.000px;color:#2a2322;">C</span>
<span class="t" style="left:246.28px;top:207.00px;font-size:12.5px;line-height:12.5px;letter-spacing:0.000px;color:#2a2322;">D</span>
<span class="t" style="left:310.63px;top:207.00px;font-size:12.5px;line-height:12.5px;letter-spacing:0.000px;color:#2a2322;">E</span>
<span class="t" style="left:374.98px;top:207.00px;font-size:12.5px;line-height:12.5px;letter-spacing:0.000px;color:#2a2322;">F</span>
<span class="t" style="left:437.93px;top:207.00px;font-size:12.5px;line-height:12.5px;letter-spacing:0.000px;color:#2a2322;">G</span>
<span class="t" style="left:502.28px;top:207.00px;font-size:12.5px;line-height:12.5px;letter-spacing:0.000px;color:#2a2322;">H</span>
<span class="t" style="left:569.06px;top:207.00px;font-size:12.5px;line-height:12.5px;letter-spacing:0.000px;color:#2a2322;">I</span>
<span class="t" style="left:631.67px;top:207.00px;font-size:12.5px;line-height:12.5px;letter-spacing:0.000px;color:#2a2322;">J</span>
<span class="t" style="left:694.63px;top:207.00px;font-size:12.5px;line-height:12.5px;letter-spacing:0.000px;color:#2a2322;">K</span>
<span class="t" style="left:759.32px;top:207.00px;font-size:12.5px;line-height:12.5px;letter-spacing:0.000px;color:#2a2322;">L</span>
<span class="t" style="left:821.59px;top:207.00px;font-size:12.5px;line-height:12.5px;letter-spacing:0.000px;color:#2a2322;">M</span>
<span class="t" style="left:886.28px;top:207.00px;font-size:12.5px;line-height:12.5px;letter-spacing:0.000px;color:#2a2322;">N</span>
<span class="t" style="left:949.93px;top:207.00px;font-size:12.5px;line-height:12.5px;letter-spacing:0.000px;color:#2a2322;">O</span>
<span class="t" style="left:991.83px;top:207.00px;font-size:12.5px;line-height:12.5px;letter-spacing:0.000px;color:#2a2322;">P</span>
<span class="t" style="left:10.12px;top:227.00px;font-size:12.5px;line-height:12.5px;letter-spacing:0.000px;color:#2a2322;">1</span>
<span class="t" style="left:10.12px;top:247.00px;font-size:12.5px;line-height:12.5px;letter-spacing:0.000px;color:#1c7145;">2</span>
<span class="t" style="left:10.12px;top:267.00px;font-size:12.5px;line-height:12.5px;letter-spacing:0.000px;color:#1c7145;">3</span>
<span class="t" style="left:10.12px;top:287.00px;font-size:12.5px;line-height:12.5px;letter-spacing:0.000px;color:#1c7145;">4</span>
<span class="t" style="left:10.12px;top:307.00px;font-size:12.5px;line-height:12.5px;letter-spacing:0.000px;color:#1c7145;">5</span>
<span class="t" style="left:10.12px;top:327.00px;font-size:12.5px;line-height:12.5px;letter-spacing:0.000px;color:#1c7145;">6</span>
<span class="t" style="left:10.12px;top:347.00px;font-size:12.5px;line-height:12.5px;letter-spacing:0.000px;color:#1c7145;">7</span>
<span class="t" style="left:10.12px;top:367.00px;font-size:12.5px;line-height:12.5px;letter-spacing:0.000px;color:#1c7145;">8</span>
<span class="t" style="left:10.12px;top:387.00px;font-size:12.5px;line-height:12.5px;letter-spacing:0.000px;color:#2a2322;">9</span>
<span class="t" style="left:7.10px;top:407.00px;font-size:12.5px;line-height:12.5px;letter-spacing:0.347px;color:#2a2322;">10</span>
<span class="t" style="left:7.10px;top:427.00px;font-size:12.5px;line-height:12.5px;letter-spacing:0.808px;color:#2a2322;">11</span>
<span class="t" style="left:7.10px;top:447.00px;font-size:12.5px;line-height:12.5px;letter-spacing:0.347px;color:#2a2322;">12</span>
<span class="t" style="left:7.10px;top:467.00px;font-size:12.5px;line-height:12.5px;letter-spacing:0.347px;color:#2a2322;">13</span>
<span class="t" style="left:7.10px;top:487.00px;font-size:12.5px;line-height:12.5px;letter-spacing:0.347px;color:#2a2322;">14</span>
<span class="t" style="left:7.10px;top:507.00px;font-size:12.5px;line-height:12.5px;letter-spacing:0.347px;color:#2a2322;">15</span>
<span class="t" style="left:7.10px;top:527.00px;font-size:12.5px;line-height:12.5px;letter-spacing:0.347px;color:#2a2322;">16</span>
<span class="t" style="left:7.10px;top:547.00px;font-size:12.5px;line-height:12.5px;letter-spacing:0.347px;color:#2a2322;">17</span>
<span class="t" style="left:7.10px;top:567.00px;font-size:12.5px;line-height:12.5px;letter-spacing:0.347px;color:#2a2322;">18</span>
<span class="t" style="left:7.10px;top:587.00px;font-size:12.5px;line-height:12.5px;letter-spacing:0.347px;color:#2a2322;">19</span>
<span class="t" style="left:7.10px;top:607.00px;font-size:12.5px;line-height:12.5px;letter-spacing:0.347px;color:#2a2322;">20</span>
<span class="t" style="left:7.10px;top:627.00px;font-size:12.5px;line-height:12.5px;letter-spacing:0.347px;color:#2a2322;">21</span>
<span class="t" style="left:7.10px;top:647.00px;font-size:12.5px;line-height:12.5px;letter-spacing:0.347px;color:#2a2322;">22</span>
<span class="t" style="left:138.10px;top:247.00px;font-size:12.5px;line-height:12.5px;letter-spacing:-0.103px;color:#1a1a1a;">15</span>
<span class="t" style="left:138.10px;top:267.00px;font-size:12.5px;line-height:12.5px;letter-spacing:-0.103px;color:#1a1a1a;">20</span>
<span class="t" style="left:138.10px;top:287.00px;font-size:12.5px;line-height:12.5px;letter-spacing:-0.103px;color:#1a1a1a;">17</span>
<span class="t" style="left:138.10px;top:307.00px;font-size:12.5px;line-height:12.5px;letter-spacing:-0.103px;color:#1a1a1a;">22</span>
<span class="t" style="left:138.10px;top:327.00px;font-size:12.5px;line-height:12.5px;letter-spacing:-0.103px;color:#1a1a1a;">35</span>
<span class="t" style="left:130.60px;top:347.00px;font-size:12.5px;line-height:12.5px;letter-spacing:0.114px;color:#1a1a1a;">109</span>
<span class="t" style="left:138.10px;top:367.00px;font-size:12.5px;line-height:12.5px;letter-spacing:-0.103px;color:#1a1a1a;">55</span>
<span class="t" style="left:112.90px;top:671.00px;font-size:13px;line-height:13px;letter-spacing:-0.042px;color:#1c7145;font-weight:bold;">microexcel.ru</span>
<span class="t" style="left:9.00px;top:697.00px;font-size:11.5px;line-height:11.5px;letter-spacing:0.181px;color:#2a2322;">Готово</span>
<span class="t" style="left:482.30px;top:697.00px;font-size:11.5px;line-height:11.5px;letter-spacing:-0.236px;color:#2a2322;">Среднее: 39</span>
<span class="t" style="left:560.40px;top:697.00px;font-size:11.5px;line-height:11.5px;letter-spacing:0.050px;color:#2a2322;">Количество: 7</span>
<span class="t" style="left:651.40px;top:697.00px;font-size:11.5px;line-height:11.5px;letter-spacing:-0.402px;color:#2a2322;">Сумма: 273</span>
<span class="t" style="left:978.40px;top:697.00px;font-size:11.5px;line-height:11.5px;letter-spacing:-0.462px;color:#2a2322;">100</span>
<span class="t" style="left:997.48px;top:697.00px;font-size:11.5px;line-height:11.5px;letter-spacing:0.000px;color:#2a2322;">%</span>
<div class="a" style="left:62px;top:32px;width:69.5px;height:30.8px;border:3px solid #ff0000;border-radius:10.5px;box-sizing:border-box;"></div>
<div id="menu">
<div class="a" style="left:862px;top:89px;width:159px;height:150px;background:#fff;border:1px solid #c6c6c6;box-sizing:border-box;box-shadow:0 1px 4px rgba(0,0,0,0.22);"></div>
<div class="a" style="left:864px;top:115px;width:155px;height:23.7px;background:#c6c6c6;"></div>
<div class="a" style="left:896px;top:211px;width:122.5px;height:1px;background:#e1e1e1;"></div>
<div class="a" style="left:864.2px;top:113.7px;width:151.6px;height:26.2px;border:3px solid #ff0000;border-radius:9.5px;box-sizing:border-box;"></div>
<svg class="a" style="left:867px;top:94px" width="18" height="17" viewBox="867 94 18 17"><path d="M882.8 97.6V96H869.5L877.776 102.4L869.5 108.8H882.8V107.2" fill="none" stroke="#3b3a44" stroke-width="1.9" stroke-linejoin="miter"/></svg>
<span class="t" style="left:896.10px;top:98.00px;font-size:11.5px;line-height:11.5px;letter-spacing:0.432px;color:#3a3433;"><u>С</u>умма</span>
<span class="t" style="left:896.10px;top:122.00px;font-size:11.5px;line-height:11.5px;letter-spacing:-0.029px;color:#3a3433;">Ср<u>е</u>днее</span>
<span class="t" style="left:895.90px;top:146.00px;font-size:11.5px;line-height:11.5px;letter-spacing:0.485px;color:#3a3433;">Сче<u>т</u>чик</span>
<span class="t" style="left:895.90px;top:170.00px;font-size:11.5px;line-height:11.5px;letter-spacing:0.686px;color:#3a3433;">М<u>а</u>ксимум</span>
<span class="t" style="left:895.90px;top:194.00px;font-size:11.5px;line-height:11.5px;letter-spacing:0.865px;color:#3a3433;"><u>М</u>инимум</span>
<span class="t" style="left:895.90px;top:220.00px;font-size:11.5px;line-height:11.5px;letter-spacing:0.294px;color:#3a3433;">Дру<u>г</u>ие функции...</span>
</div>
<svg class="a" style="left:930px;top:60px" width="26" height="36" viewBox="930 60 26 36"><rect x="934.6" y="64.4" width="15.8" height="26.2" rx="7.9" ry="9.5" fill="none" stroke="#ff0000" stroke-width="2.8"/></svg>
</div>
</body></html>
